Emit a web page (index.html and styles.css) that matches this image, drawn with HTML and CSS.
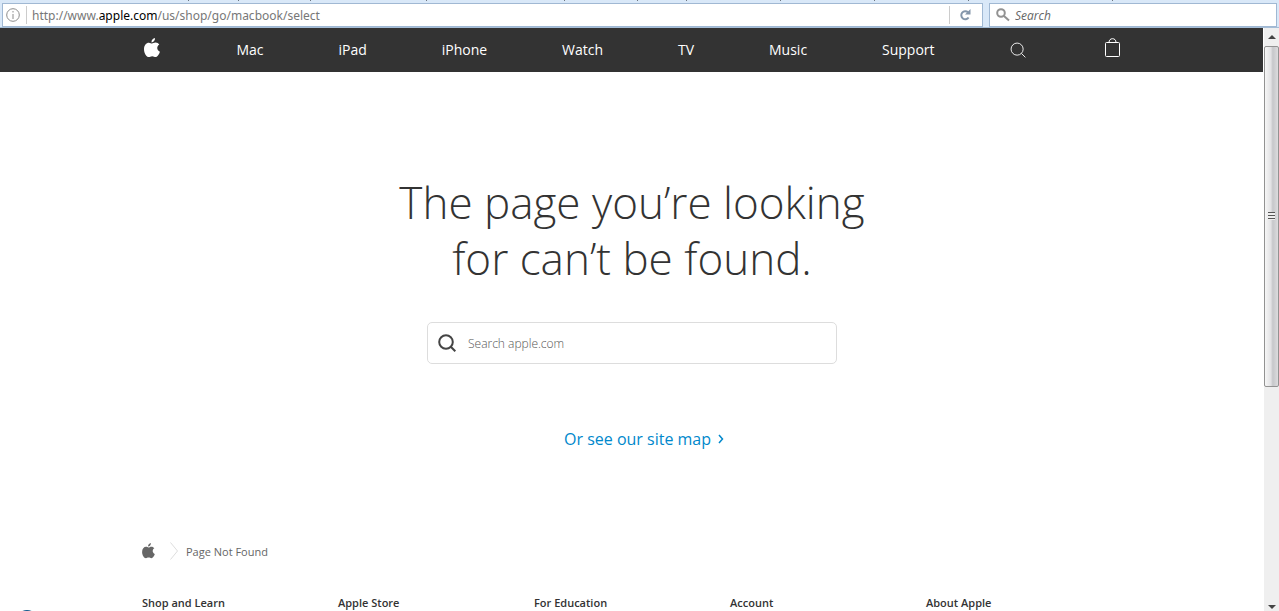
FILE: index.html
```
<!DOCTYPE html>
<html lang="en">
<head>
    <meta charset="UTF-8">
    <meta name="viewport" content="width=device-width, initial-scale=1.0">
    <title>Page Not Found - Apple</title>
    <link rel="stylesheet" href="styles.css">
</head>
<body>
    <svg class="sprite" aria-hidden="true">
        <symbol id="apple" viewBox="0 0 16 20">
            <path d="M11 0c.2 2.300-1.500 4.400-3.500 4.400C7.200 2.300 9 .3 11 0zM8 5.600c.8 0 1.900-1 3.600-1 1.500 0 2.900.8 3.700 2-3 1.800-2.600 5.800.6 7.100-.8 2.500-2.400 5.300-4.300 5.300-1.200 0-1.800-.8-3.400-.8s-2.300.8-3.400.8C2.600 19 0 15.300 0 11.200c0-4 2.300-6.500 4.900-6.500 1.400 0 2.300.9 3.100.9z"/>
        </symbol>
        <symbol id="lens" viewBox="0 0 18 18">
            <circle cx="8" cy="8" r="6.800"/>
            <path d="M12.800 12.800l4.500 4.500"/>
        </symbol>
    </svg>

    <header class="toolbar">
        <svg class="tab-edges" aria-hidden="true"><path d="M188.500 0v1M238.500 0v1M310.500 0v1M426.500 0v1M564.500 0v1M637.500 0v1M686.500 0v1M780.500 0v1M874.500 0v1M968.500 0v1M1112.500 0v1"/></svg>
        <div class="bars">
            <div class="address">
                <svg class="info" viewBox="0 0 14 14"><circle cx="7" cy="7" r="6.300"/><path d="M7 6v5M7 3v1.500"/></svg>
                <div class="url" role="textbox" aria-label="Address">http://www.<b>apple.com</b>/us/shop/go/macbook/select</div>
                <button class="reload" aria-label="Reload">
                    <svg viewBox="0 0 12 12"><path class="arc" d="M9 3.300A4 4 0 1 0 9.600 8.500"/><path class="tip" d="M11.500 0v5.500H6z"/></svg>
                </button>
            </div>
            <div class="search-bar">
                <svg viewBox="0 0 14 14"><circle cx="5" cy="5" r="3.800"/><path d="M8 8l5 4.600"/></svg>
                <input type="search" placeholder="Search" aria-label="Search the web">
            </div>
        </div>
    </header>

    <div class="viewport">
        <div class="page">
            <nav class="globalnav">
                <div class="nav-list">
                    <a href="#" class="nav-apple" aria-label="Apple"><svg><use href="#apple"/></svg></a>
                    <a href="#">Mac</a>
                    <a href="#">iPad</a>
                    <a href="#">iPhone</a>
                    <a href="#">Watch</a>
                    <a href="#">TV</a>
                    <a href="#">Music</a>
                    <a href="#">Support</a>
                    <a href="#" class="nav-search" aria-label="Search apple.com"><svg><use href="#lens"/></svg></a>
                    <a href="#" class="nav-bag" aria-label="Shopping Bag"><svg viewBox="0 0 15 19"><path d="M1.500 4.500h12q1 0 1 1v12q0 1-1 1h-12q-1 0-1-1v-12q0-1 1-1zM4 4.500C4 2 5.500.7 7.500.7S11 2 11 4.500"/></svg></a>
                </div>
            </nav>

            <main class="main">
                <h1>The page you’re looking<br>for can’t be found.</h1>
                <form class="search-form">
                    <svg><use href="#lens"/></svg>
                    <input type="text" placeholder="Search apple.com" aria-label="Search apple.com">
                </form>
                <a href="#" class="sitemap">Or see our site map <svg viewBox="0 0 6 10"><path d="M1 1l3.500 4L1 9"/></svg></a>
            </main>

            <footer class="footer">
                <div class="breadcrumbs">
                    <a href="#" aria-label="Apple"><svg class="crumb-apple"><use href="#apple"/></svg></a>
                    <svg class="crumb-arrow" viewBox="0 0 8 18"><path d="M.5.500l7 8.500-7 8.500"/></svg>
                    <span>Page Not Found</span>
                </div>
                <div class="directory">
                    <h3>Shop and Learn</h3>
                    <h3>Apple Store</h3>
                    <h3>For Education</h3>
                    <h3>Account</h3>
                    <h3>About Apple</h3>
                </div>
            </footer>
        </div>

        <div class="scrollbar">
            <svg class="arrow" viewBox="0 0 8 4"><path d="M4 0l4 4H0z"/></svg>
            <div class="track"><div class="thumb"><div class="grip"></div></div></div>
            <svg class="arrow" viewBox="0 0 8 4"><path d="M0 0h8L4 4z"/></svg>
        </div>
    </div>
    <div class="status-orb"></div>
</body>
</html>
```

FILE: styles.css
```
* {
    margin: 0;
    padding: 0;
    box-sizing: border-box;
}

body {
    display: flex;
    flex-direction: column;
    height: 100vh;
    overflow: hidden;
    font-family: "Open Sans", "Noto Sans", sans-serif;
    color: #333;
    background: #fff;
}

a {
    color: inherit;
    text-decoration: none;
}

svg {
    display: block;
    flex: none;
    fill: none;
}

input {
    border: none;
    outline: none;
    background: none;
    font-family: inherit;
    flex: 1;
    min-width: 0;
}

.sprite {
    position: absolute;
    width: 0;
    height: 0;
}

/* Browser toolbar */
.toolbar {
    flex: none;
    background: #d9e8f8;
    border-bottom: 1px solid #a5bdd6;
}

.tab-edges {
    width: 100%;
    height: 3px;
    stroke: #6d7680;
}

.bars {
    display: flex;
    gap: 6px;
    padding: 0 2px;
}

.address,
.search-bar {
    display: flex;
    align-items: center;
    height: 24px;
    background: #fff;
    border: 1px solid #a0b8d3;
}

.address {
    flex: 1;
    padding-left: 3px;
}

.info {
    width: 14px;
    height: 14px;
    stroke: #8c8c8c;
}

.url {
    flex: 1;
    margin-left: 6px;
    padding: 1px 0 0 5px;
    border-left: 1px solid #ccc;
    font-family: "Noto Sans", sans-serif;
    font-size: 12px;
    line-height: 17px;
    color: #777;
}

.url b {
    font-weight: 400;
    color: #000;
}

.reload {
    width: 33px;
    height: 18px;
    padding-left: 9px;
    background: none;
    border: none;
    border-left: 1px solid #ccc;
}

.reload svg {
    width: 12px;
    height: 12px;
}

.arc {
    stroke: #8496aa;
    stroke-width: 2;
}

.tip {
    fill: #8496aa;
}

.search-bar {
    width: 288px;
    padding-left: 6px;
    gap: 5px;
}

.search-bar svg {
    width: 14px;
    height: 14px;
    stroke: #929292;
    stroke-width: 2;
}

.search-bar input {
    font-size: 12px;
    font-style: italic;
}

.search-bar input::placeholder {
    color: #666;
}

.viewport {
    display: flex;
    flex: 1;
    min-height: 0;
}

.page {
    flex: 1;
    overflow: hidden;
}

/* Navigation */
.globalnav {
    margin-right: 1px;
    background: #333;
}

.nav-list {
    display: flex;
    justify-content: space-between;
    align-items: center;
    max-width: 980px;
    height: 44px;
    margin: 0 auto;
    padding: 0 1px 2px 2px;
    color: #fff;
    font-size: 14px;
}

.nav-apple {
    padding-right: 2px;
}

.nav-apple svg {
    width: 16px;
    height: 20px;
    margin-bottom: 2px;
    fill: #fff;
}

.nav-search svg {
    width: 16px;
    height: 16px;
    margin-top: 2px;
    stroke: #fff;
}

.nav-bag {
    padding-left: 5px;
}

.nav-bag svg {
    width: 15px;
    height: 19px;
    margin-bottom: 3px;
    stroke: #fff;
}

/* Not found message */
.main {
    display: flex;
    flex-direction: column;
    align-items: center;
    padding: 102px 20px 91px;
}

h1 {
    font-size: 44px;
    line-height: 56px;
    font-weight: 300;
    text-align: center;
}

.search-form {
    display: flex;
    align-items: center;
    gap: 12px;
    width: 410px;
    max-width: 100%;
    height: 42px;
    margin-top: 36px;
    padding: 0 10px;
    border: 1px solid #ddd;
    border-radius: 5px;
}

.search-form svg {
    width: 18px;
    height: 18px;
    stroke: #444;
    stroke-width: 2;
}

.search-form input {
    font-size: 12px;
    font-weight: 300;
}

.search-form input::placeholder {
    color: #555;
}

.sitemap {
    display: flex;
    align-items: center;
    gap: 7px;
    margin-top: 63px;
    padding-left: 24px;
    font-size: 16px;
    line-height: 24px;
    color: #08c;
}

.sitemap svg {
    width: 6px;
    height: 10px;
    stroke: #08c;
    stroke-width: 1.5;
}

/* Footer */
.footer {
    max-width: 980px;
    margin: 0 auto;
}

.breadcrumbs {
    display: flex;
    align-items: center;
    height: 18px;
    font-size: 11px;
    color: #666;
}

.crumb-apple {
    width: 13px;
    height: 16px;
    fill: #666;
}

.crumb-arrow {
    width: 8px;
    height: 18px;
    margin: 0 8px 0 15px;
    stroke: #ddd;
}

.directory {
    display: grid;
    grid-template-columns: repeat(5, 1fr);
    margin-top: 35px;
}

h3 {
    font-size: 11px;
    line-height: 16px;
    font-weight: 600;
}

/* Scrollbar */
.scrollbar {
    display: flex;
    flex-direction: column;
    align-items: center;
    width: 15px;
    padding: 7px 0 2px;
    background: #efefef;
}

.arrow {
    width: 8px;
    height: 4px;
    fill: #444;
}

.track {
    flex: 1;
    width: 100%;
    padding-top: 7px;
}

.thumb {
    display: flex;
    align-items: center;
    justify-content: center;
    height: 61%;
    border: 1px solid #929292;
    border-radius: 2px;
    background: linear-gradient(to right, #f6f6f6, #e2e2e4 45%, #c6c7ca 60%, #dcdcde);
}

.grip {
    width: 7px;
    height: 8px;
    background: repeating-linear-gradient(#555 0 1px, #eee 1px 3px);
}

/* Floating status button, mostly below the fold */
.status-orb {
    position: absolute;
    left: 15px;
    bottom: -23px;
    width: 24px;
    height: 24px;
    border-radius: 50%;
    background: #145a8d;
}
```
